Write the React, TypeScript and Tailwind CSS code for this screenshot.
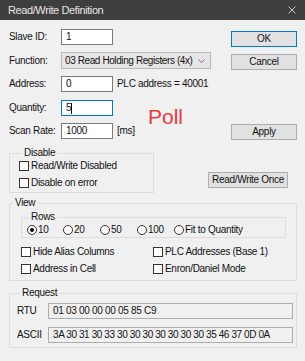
import React from "react";

const FONT = { fontFamily: '"Liberation Sans", Arial, sans-serif' };

function Check({ label }: { label: string }) {
  return (
    <div className="flex items-center h-[10px]">
      <div className="w-[10px] h-[10px] border border-[#333333] bg-white shrink-0" />
      <span className="ml-[2px] leading-none whitespace-nowrap">{label}</span>
    </div>
  );
}

function Radio({ label, checked, w }: { label: string; checked?: boolean; w: string }) {
  return (
    <div className={`flex items-center h-[10px] ${w}`}>
      <div className="w-[10px] h-[10px] rounded-full border border-[#333333] bg-white shrink-0 flex items-center justify-center">
        {checked && <div className="w-[4px] h-[4px] rounded-full bg-black" />}
      </div>
      <span className="ml-[1px] leading-none whitespace-nowrap">{label}</span>
    </div>
  );
}

function Label({ children }: { children: React.ReactNode }) {
  return <span className="w-[52px] shrink-0 leading-none whitespace-nowrap">{children}</span>;
}

function Input({ value, w = "w-[52px]", focused }: { value: string; w?: string; focused?: boolean }) {
  return (
    <div
      className={`${w} h-full bg-white border ${
        focused ? "border-[#0078d7]" : "border-[#7a7a7a]"
      } flex items-center pl-[4px] leading-none`}
    >
      <span>{value}</span>
      {focused && <span className="w-[1px] h-[11px] bg-black" />}
    </div>
  );
}

function Button({ children, cls }: { children: React.ReactNode; cls: string }) {
  return (
    <div className={`${cls} bg-[#e1e1e1] border flex items-center justify-center leading-none whitespace-nowrap`}>
      {children}
    </div>
  );
}

export default function App() {
  return (
    <div
      className="relative w-[305px] h-[361px] bg-[#f0f0f0] text-[#111111] text-[10px] tracking-[-0.3px] overflow-hidden"
      style={FONT}
    >
      {/* title bar */}
      <div className="h-[20px] bg-[#3e3e3e] flex items-center justify-between pl-[8px] pr-[8px]">
        <span className="text-[#e6e6e6] text-[11px] tracking-[-0.4px] leading-none">Read/Write Definition</span>
        <svg width="8" height="8" viewBox="0 0 8 8" className="mr-[1px]">
          <path d="M0.5 0.5 L7.5 7.5 M7.5 0.5 L0.5 7.5" stroke="#c8c8c8" strokeWidth="1" />
        </svg>
      </div>

      {/* top section */}
      <div className="flex">
        <div className="w-[231px] pl-[9px] flex flex-col">
          <div className="mt-[9px] h-[16px] flex items-center">
            <Label>Slave ID:</Label>
            <Input value="1" />
          </div>
          <div className="mt-[7px] h-[17px] flex items-center">
            <Label>Function:</Label>
            <div className="w-[150px] h-full bg-[#e6e6e6] border border-[#b8b8b8] flex items-center pl-[3px] pr-[5px] justify-between leading-none">
              <span className="whitespace-nowrap tracking-[-0.4px]">03 Read Holding Registers (4x)</span>
              <svg width="7" height="4" viewBox="0 0 7 4">
                <path d="M0.5 0.5 L3.5 3.5 L6.5 0.5" stroke="#777" strokeWidth="1" fill="none" />
              </svg>
            </div>
          </div>
          <div className="mt-[7px] h-[16px] flex items-center">
            <Label>Address:</Label>
            <Input value="0" />
            <span className="ml-[4px] leading-none whitespace-nowrap">PLC address = 40001</span>
          </div>
          <div className="mt-[8px] h-[16px] flex items-center">
            <Label>Quantity:</Label>
            <Input value="5" focused />
          </div>
          <div className="mt-[7px] h-[16px] flex items-center">
            <Label>Scan Rate:</Label>
            <Input value="1000" />
            <span className="ml-[4px] leading-none">[ms]</span>
          </div>
        </div>
        <div className="w-[66px] flex flex-col">
          <Button cls="mt-[11px] h-[16px] border-[#0078d7]">OK</Button>
          <Button cls="mt-[7px] h-[16px] border-[#adadad]">Cancel</Button>
          <Button cls="mt-[54px] h-[16px] border-[#adadad]">Apply</Button>
        </div>
      </div>

      {/* Disable + Read/Write Once */}
      <div className="flex items-start mt-[7px]">
        <fieldset className="ml-[9px] w-[145px] border border-[#dcdcdc] pl-[9px] pb-[4px]">
          <legend className="ml-[3px] px-[2px] leading-[12px]">Disable</legend>
          <div className="mt-[2px]">
            <Check label="Read/Write Disabled" />
          </div>
          <div className="mt-[7px]">
            <Check label="Disable on error" />
          </div>
        </fieldset>
        <Button cls="ml-[54px] mt-[25px] w-[80px] h-[16px] border-[#adadad]">Read/Write Once</Button>
      </div>

      {/* View */}
      <fieldset className="mt-[4px] ml-[9px] w-[288px] border border-[#dcdcdc] pb-[6px]">
        <legend className="ml-[3px] px-[2px] leading-[12px]">View</legend>
        <fieldset className="mt-[2px] ml-[11px] w-[265px] border border-[#dcdcdc] pl-[5px] pb-[2px]">
          <legend className="ml-[2px] px-[2px] leading-[12px]">Rows</legend>
          <div className="mt-[2px] flex items-center">
            <Radio label="10" checked w="w-[36px]" />
            <Radio label="20" w="w-[37px]" />
            <Radio label="50" w="w-[37px]" />
            <Radio label="100" w="w-[37px]" />
            <Radio label="Fit to Quantity" w="" />
          </div>
        </fieldset>
        <div className="mt-[9px] ml-[11px] grid grid-cols-[132px_1fr] gap-y-[7px]">
          <Check label="Hide Alias Columns" />
          <Check label="PLC Addresses (Base 1)" />
          <Check label="Address in Cell" />
          <Check label="Enron/Daniel Mode" />
        </div>
      </fieldset>

      {/* Request */}
      <fieldset className="mt-[6px] ml-[9px] w-[288px] border border-[#dcdcdc] pl-[7px] pb-[4px]">
        <legend className="ml-[3px] px-[2px] leading-[12px]">Request</legend>
        <div className="mt-[4px] h-[16px] flex items-center">
          <span className="w-[31px] shrink-0 leading-none">RTU</span>
          <div className="w-[245px] h-full bg-[#f0f0f0] border border-[#acacac] flex items-center pl-[4px] leading-none whitespace-nowrap">
            01 03 00 00 00 05 85 C9
          </div>
        </div>
        <div className="mt-[8px] h-[16px] flex items-center">
          <span className="w-[31px] shrink-0 leading-none">ASCII</span>
          <div className="w-[245px] h-full bg-[#f0f0f0] border border-[#acacac] flex items-center pl-[4px] leading-none whitespace-nowrap tracking-[-0.4px]">
            3A 30 31 30 33 30 30 30 30 30 30 30 35 46 37 0D 0A
          </div>
        </div>
      </fieldset>

      {/* Poll annotation overlay */}
      <span className="absolute left-[148px] top-[106px] text-[21px] tracking-normal leading-none text-[#e53b3b]">
        Poll
      </span>
    </div>
  );
}
